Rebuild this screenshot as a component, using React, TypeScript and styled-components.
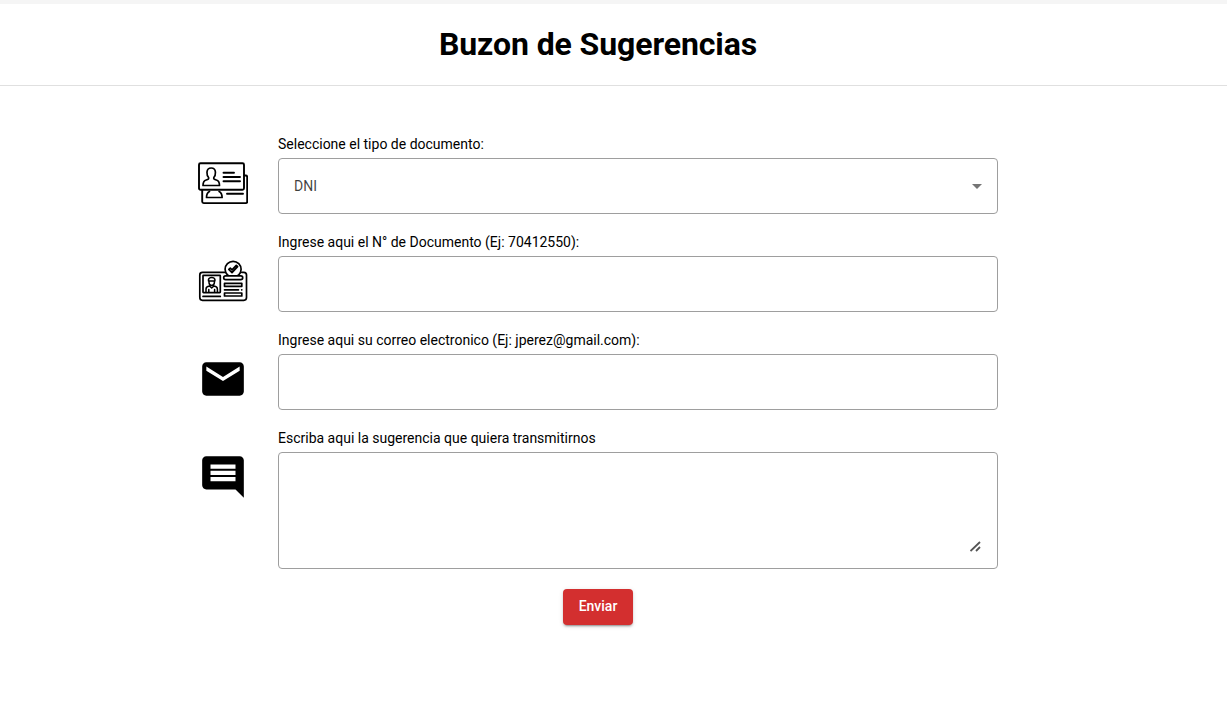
import React from "react";
import styled, { createGlobalStyle } from "styled-components";

const GlobalStyle = createGlobalStyle`
  *, *::before, *::after { box-sizing: border-box; }
  body {
    margin: 0;
    background: #fff;
    color: #000;
    font-family: Roboto, "Liberation Sans", sans-serif;
  }
`;

const Page = styled.main`
  min-height: 727px;
  border-top: 4px solid #f5f5f5;
`;

const Header = styled.header`
  height: 82px;
  padding: 0 31px 2px 0;
  display: flex;
  align-items: center;
  justify-content: center;
  border-bottom: 1px solid #e0e0e0;
`;

const Title = styled.h1`
  margin: 0;
  font-size: 32px;
  line-height: 38px;
  font-weight: 700;
  letter-spacing: -0.1px;
`;

const Form = styled.form`
  width: 800px;
  margin: 48px 0 0 198px;
  display: flex;
  flex-direction: column;
  gap: 18px;
`;

const Row = styled.div`
  display: flex;
  gap: 30px;
`;

const IconSlot = styled.svg`
  flex: none;
  width: 50px;
  height: 50px;
  margin-top: 24px;
`;

const Field = styled.label`
  flex: 1;
  display: flex;
  flex-direction: column;
  gap: 4px;
  font-size: 14px;
  line-height: 20px;
`;

const Input = styled.input`
  height: 56px;
  width: 100%;
  padding: 0 16px;
  border: 1px solid #9e9e9e;
  border-radius: 4px;
  background: #fff;
  font: inherit;
  outline: none;
`;

const SelectBox = styled.div`
  height: 56px;
  padding: 0 15px;
  display: flex;
  align-items: center;
  justify-content: space-between;
  border: 1px solid #9e9e9e;
  border-radius: 4px;
  color: rgba(0, 0, 0, 0.75);
`;

const Arrow = styled.span`
  border: 5px solid transparent;
  border-top-color: #757575;
  border-bottom: 0;
`;

const MessageBox = styled.div`
  height: 117px;
  padding: 16px 15px;
  display: flex;
  align-items: flex-end;
  border: 1px solid #9e9e9e;
  border-radius: 4px;
`;

const Message = styled.textarea`
  flex: 1;
  height: 84px;
  padding: 0;
  border: 0;
  outline: none;
  resize: none;
  background: transparent;
  font: inherit;
`;

const Grip = styled.svg`
  flex: none;
  width: 12px;
  height: 12px;
`;

const Submit = styled.button`
  align-self: center;
  width: 70px;
  height: 36px;
  margin-top: 2px;
  padding: 0 0 2px;
  border: 0;
  border-radius: 4px;
  background: #d32f2f;
  color: #fff;
  font: 500 14px/34px Roboto, sans-serif;
  box-shadow: 0 3px 1px -2px rgba(0, 0, 0, 0.2), 0 2px 2px rgba(0, 0, 0, 0.14),
    0 1px 5px rgba(0, 0, 0, 0.12);
`;

const CardsIcon = () => (
  <IconSlot viewBox="0 0 50 50" fill="none" stroke="#000" strokeWidth="1.9" strokeLinecap="round" strokeLinejoin="round">
    <rect x="1" y="5.3" width="45" height="26.5" rx="1.5" />
    <path d="M46.5 17.500h1.200q1.500 0 1.500 1.500v24.600q0 1.500-1.500 1.500H5.700q-1.500 0-1.500-1.500V32" />
    <path d="M10.600 19.500C8.700 17.500 8.900 16 9 14q.3-4 4.200-4t4.200 4c.1 2 .3 3.500-1.600 5.500-.4 1.500.5 2 2.500 2.500 2.300.6 3.200 2 3.200 5.500H5c0-3.500.9-4.900 3.200-5.500 2-.5 2.800-1 2.400-2.500z" strokeWidth="1.700" />
    <path d="M25.500 14.800h10.500M25.500 19h16.500M25.500 23.300h16.500M29 35.700h16" />
    <path d="M11.500 33.500c-2 1-3 3-3 6h15.600c0-3-1-5-3-6" strokeWidth="1.700" />
  </IconSlot>
);

const VerifiedIcon = () => (
  <IconSlot viewBox="0 0 50 50" fill="none" stroke="#000" strokeWidth="1.700" strokeLinecap="round" strokeLinejoin="round">
    <path d="M26.500 16.300H4.500Q1.800 16.300 1.800 19v22.600q0 2.700 2.700 2.700h41.300q2.700 0 2.700-2.700V19q0-2.700-2.700-2.700h-2" />
    <rect x="5" y="19.300" width="17.300" height="17.300" rx="0.500" />
    <path d="M5 40.400h17.300" />
    <circle cx="35.100" cy="13.300" r="8" />
    <path d="M30.800 13.500l1.500-1.300 1.700 1.600 4.300-4.500 1.300 1.300-5.600 6z" />
    <rect x="25.700" y="19.800" width="19" height="3.800" rx="1.900" fill="#fff" />
    <rect x="26.500" y="27.300" width="17.300" height="3" />
    <path d="M26.500 33.800h14M43.700 33.800h.1" />
    <rect x="26.500" y="37" width="17.300" height="3" />
    <path d="M10.500 25v-1.500q.5-2 3.200-2t3.200 2V25zM11 25v1.500q0 2.500 2.700 3 2.700-.5 2.700-3V25M8 36v-3q0-2.500 3.500-3l2.200 2 2.200-2q3.500.5 3.500 3v3M10.800 33.500V36M16.600 33.500V36" strokeWidth="1.500" />
  </IconSlot>
);

const MailIcon = () => (
  <IconSlot viewBox="0 0 24 24">
    <path d="M20 4H4c-1.100 0-1.990.9-1.990 2L2 18c0 1.100.9 2 2 2h16c1.100 0 2-.9 2-2V6c0-1.100-.9-2-2-2zm0 4l-8 5-8-5V6l8 5 8-5v2z" />
  </IconSlot>
);

const CommentIcon = () => (
  <IconSlot viewBox="0 0 24 24">
    <path d="M21.990 4c0-1.100-.89-2-1.990-2H4c-1.100 0-2 .9-2 2v12c0 1.100.9 2 2 2h14l4 4-.01-18zM18 14H6v-2h12v2zm0-3H6V9h12v2zm0-3H6V6h12v2z" />
  </IconSlot>
);

export default function App() {
  return (
    <Page>
      <GlobalStyle />
      <Header>
        <Title>Buzon de Sugerencias</Title>
      </Header>
      <Form onSubmit={(e) => e.preventDefault()}>
        <Row>
          <CardsIcon />
          <Field as="div">
            <span>Seleccione el tipo de documento:</span>
            <SelectBox role="combobox" aria-expanded={false} tabIndex={0}>
              <span>DNI</span>
              <Arrow />
            </SelectBox>
          </Field>
        </Row>
        <Row>
          <VerifiedIcon />
          <Field>
            <span>Ingrese aqui el N° de Documento (Ej: 70412550):</span>
            <Input />
          </Field>
        </Row>
        <Row>
          <MailIcon />
          <Field>
            <span>Ingrese aqui su correo electronico (Ej: jperez@gmail.com):</span>
            <Input type="email" />
          </Field>
        </Row>
        <Row>
          <CommentIcon />
          <Field>
            <span>Escriba aqui la sugerencia que quiera transmitirnos</span>
            <MessageBox>
              <Message />
              <Grip viewBox="0 0 12 12" stroke="#555" strokeWidth="1.800">
                <path d="M0.500 11l9.500-9M6 11l4-4" />
              </Grip>
            </MessageBox>
          </Field>
        </Row>
        <Submit type="submit">Enviar</Submit>
      </Form>
    </Page>
  );
}
